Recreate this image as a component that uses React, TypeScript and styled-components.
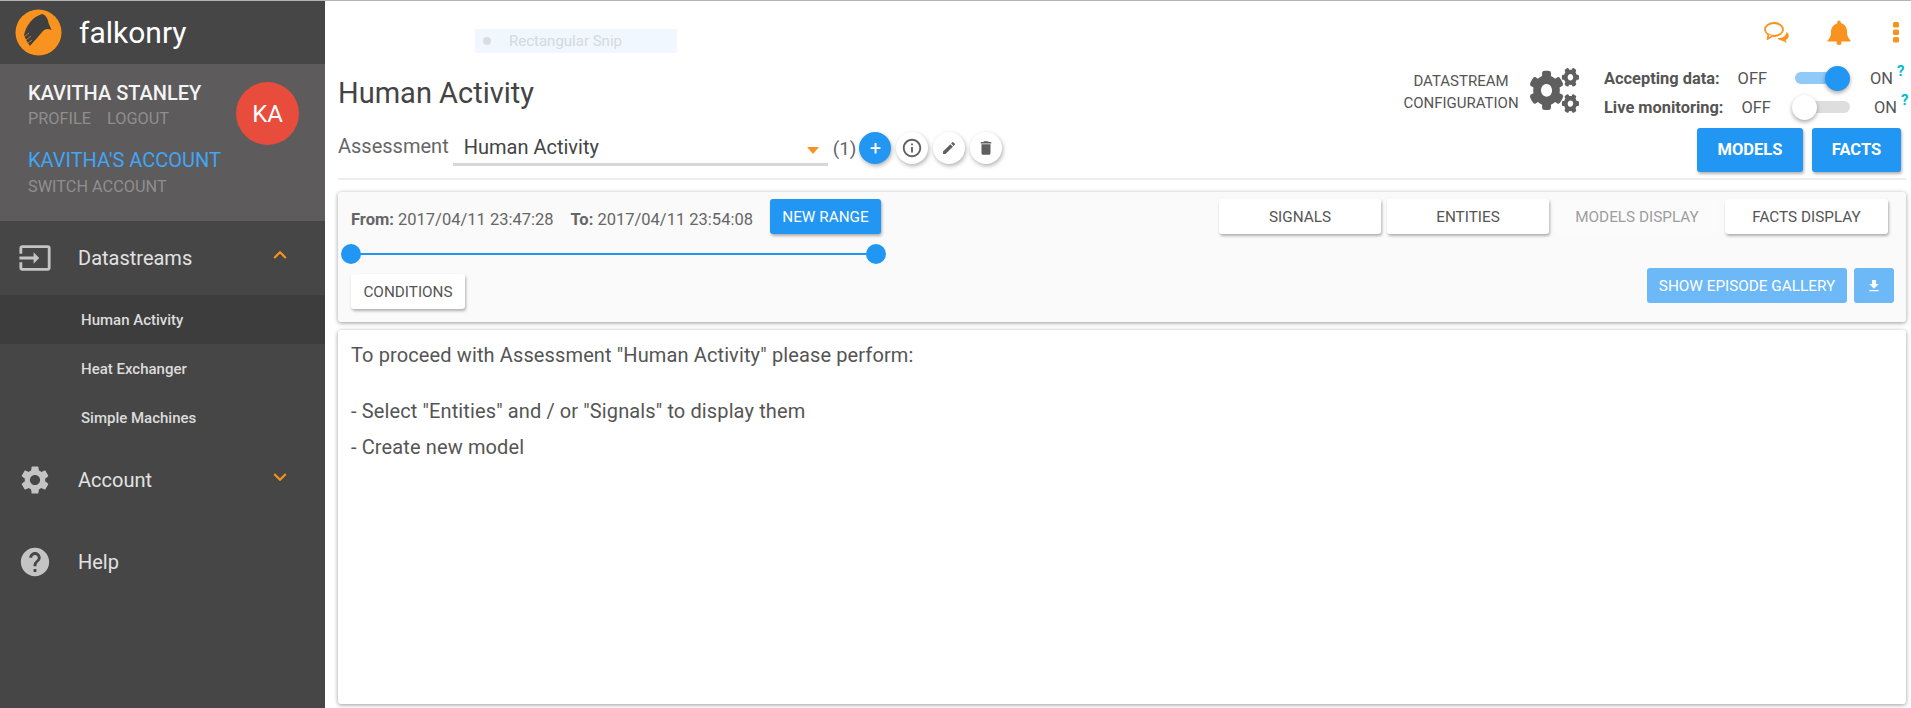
import styled, { createGlobalStyle } from "styled-components";
import {
  MdInput,
  MdSettings,
  MdHelp,
  MdKeyboardArrowUp,
  MdKeyboardArrowDown,
  MdInfoOutline,
  MdEdit,
  MdDelete,
  MdFileDownload,
} from "react-icons/md";
import { FaCogs } from "react-icons/fa";

const GlobalStyle = createGlobalStyle`
  html, body {
    margin: 0;
    padding: 0;
    background: #fff;
    font-family: Roboto, "Liberation Sans", sans-serif;
    color: #555;
  }
  * { box-sizing: border-box; }
`;

const Page = styled.div`
  display: flex;
  width: 1911px;
  height: 708px;
  overflow: hidden;
  border-top: 1px solid #b4b4b4;
`;

const Sidebar = styled.aside`
  width: 325px;
  flex-shrink: 0;
  background: #464646;
  display: flex;
  flex-direction: column;
`;

const Brand = styled.div`
  height: 63px;
  display: flex;
  align-items: center;
  padding-left: 15px;
  gap: 17px;
  color: #fff;
  font-size: 30px;
`;

const UserPanel = styled.div`
  height: 157px;
  background: #5d5b5c;
  padding: 18px 0 0 28px;
  position: relative;
`;

const UserName = styled.div`
  color: #f4f4f4;
  font-size: 20px;
  font-weight: 500;
  line-height: 22px;
`;

const AccountName = styled.div`
  color: #42a5f5;
  font-size: 20px;
  line-height: 22px;
  margin-top: 21px;
`;

const MutedLinks = styled.div`
  display: flex;
  gap: 16px;
  color: #8f8f8f;
  font-size: 16.3px;
  line-height: 18px;
  margin-top: 6px;
`;

const SwitchLink = styled(MutedLinks)`
  margin-top: 7px;
`;

const Avatar = styled.div`
  position: absolute;
  left: 236px;
  top: 18px;
  width: 63px;
  height: 63px;
  border-radius: 50%;
  background: #e74c3c;
  color: #fff;
  font-size: 24px;
  display: flex;
  align-items: center;
  justify-content: center;
`;

const NavItem = styled.div<{ $height: number }>`
  height: ${(p) => p.$height}px;
  display: flex;
  align-items: center;
  padding-left: 18px;
  color: #e2e2e2;
  font-size: 20px;
  svg.nav-icon {
    width: 34px;
    height: 34px;
    color: #c4c4c4;
    margin-right: 26px;
    flex-shrink: 0;
  }
  svg.chevron {
    width: 26px;
    height: 26px;
    color: #f7931e;
    margin-left: auto;
    margin-right: 32px;
    margin-top: -6px;
  }
`;

const SubItem = styled.div<{ $active?: boolean }>`
  height: 49px;
  display: flex;
  align-items: center;
  padding-left: 81px;
  font-size: 15px;
  font-weight: 500;
  color: #dcdcdc;
  background: ${(p) => (p.$active ? "#3d3d3d" : "transparent")};
`;

const Main = styled.main`
  flex: 1;
  min-width: 0;
  padding: 0 5px 0 13px;
  display: flex;
  flex-direction: column;
`;

const TopBar = styled.div`
  height: 60px;
  display: flex;
  align-items: center;
  padding-top: 2px;
`;

const Snip = styled.div`
  margin: 18px 0 0 137px;
  width: 202px;
  height: 24px;
  background: #f0f7fe;
  display: flex;
  align-items: center;
  color: #d5dadd;
  font-size: 15px;
  &::before {
    content: "";
    width: 8px;
    height: 8px;
    border-radius: 50%;
    background: #d9dde0;
    margin: 0 18px 0 8px;
  }
`;

const TopIcons = styled.div`
  margin-left: auto;
  display: flex;
  align-items: center;
  gap: 38px;
  padding-right: 7px;
`;

const BellSvg = styled.svg`
  margin-right: 4px;
`;

const TitleRow = styled.div`
  height: 66px;
  display: flex;
  align-items: flex-start;
  justify-content: space-between;
`;

const Title = styled.h1`
  margin: 12px 0 0;
  font-size: 29px;
  font-weight: 400;
  color: #444;
  line-height: 40px;
`;

const StatusArea = styled.div`
  display: flex;
  align-items: flex-start;
`;

const ConfigLabel = styled.div`
  font-size: 15px;
  line-height: 22px;
  text-align: center;
  color: #555;
  padding-top: 9px;
  width: 122px;
`;

const ConfigIcon = styled(FaCogs)`
  width: 49px;
  height: 45px;
  color: #5f5f5f;
  margin: 7px 25px 0 8px;
`;

const ToggleList = styled.div`
  display: flex;
  flex-direction: column;
  gap: 9px;
  width: 302px;
  padding-top: 7px;
`;

const ToggleRow = styled.div`
  display: flex;
  align-items: center;
  height: 20px;
  font-size: 16.4px;
  color: #555;
`;

const ToggleLabel = styled.span`
  font-weight: 700;
  margin-right: 18px;
`;

const Switch = styled.span<{ $on?: boolean }>`
  position: relative;
  width: 55px;
  height: 12px;
  border-radius: 6px;
  background: ${(p) => (p.$on ? "#90caf9" : "#dedede")};
  margin-left: auto;
  &::after {
    content: "";
    position: absolute;
    top: -6.5px;
    left: ${(p) => (p.$on ? "30px" : "-3px")};
    width: 25px;
    height: 25px;
    border-radius: 50%;
    background: ${(p) => (p.$on ? "#2196f3" : "#fff")};
    box-shadow: 0 2px 4px rgba(0, 0, 0, 0.35);
  }
`;

const OnLabel = styled.span<{ $indent: number }>`
  position: relative;
  width: 56px;
  flex-shrink: 0;
  padding-left: ${(p) => p.$indent}px;
  sup {
    position: absolute;
    left: ${(p) => p.$indent + 27}px;
    top: -7px;
    color: #00bcd4;
    font-size: 15px;
    font-weight: 700;
  }
`;

const AssessmentRow = styled.div`
  height: 53px;
  display: flex;
  align-items: center;
  border-bottom: 2px solid #eee;
  padding-bottom: 9px;
`;

const AssessmentLabel = styled.span`
  font-size: 20px;
  color: #666;
  margin-top: -5px;
`;

const SelectBox = styled.div`
  width: 375px;
  height: 36px;
  margin-left: 4px;
  padding-left: 11px;
  border-bottom: 3px solid #d8d8d8;
  display: flex;
  align-items: center;
  font-size: 20px;
  color: #444;
  &::after {
    content: "";
    margin-left: auto;
    margin-right: 9px;
    margin-top: 8px;
    border-left: 6px solid transparent;
    border-right: 6px solid transparent;
    border-top: 7px solid #f7931e;
  }
`;

const Count = styled.span`
  font-size: 19px;
  color: #666;
  margin: 0 3px 0 5px;
`;

const RoundButton = styled.button<{ $primary?: boolean }>`
  width: 32px;
  height: 32px;
  border-radius: 50%;
  border: 0;
  padding: 0;
  margin-right: 5px;
  background: ${(p) => (p.$primary ? "#2196f3" : "#fff")};
  color: ${(p) => (p.$primary ? "#fff" : "#5f5f5f")};
  font-size: 20px;
  font-family: inherit;
  display: flex;
  align-items: center;
  justify-content: center;
  box-shadow: 1px 2px 4px rgba(0, 0, 0, 0.3);
`;

const HeaderActions = styled.div`
  margin-left: auto;
  display: flex;
  gap: 9px;
  padding-right: 5px;
  margin-top: 3px;
`;

const Button = styled.button<{ $width: number; $variant?: string; $height?: number; $bold?: boolean }>`
  width: ${(p) => p.$width}px;
  height: ${(p) => p.$height ?? 35}px;
  border: 0;
  padding: 0;
  border-radius: 3px;
  font-family: inherit;
  font-size: ${(p) => (p.$bold ? 16.5 : 15.3)}px;
  font-weight: ${(p) => (p.$bold ? 700 : 400)};
  display: flex;
  align-items: center;
  justify-content: center;
  background: ${(p) =>
    p.$variant === "primary"
      ? "#2196f3"
      : p.$variant === "soft"
        ? "#6db8f6"
        : p.$variant === "disabled"
          ? "#fbfbfb"
          : "#fff"};
  color: ${(p) =>
    p.$variant === "primary" || p.$variant === "soft"
      ? "#fff"
      : p.$variant === "disabled"
        ? "#9e9e9e"
        : "#555"};
  box-shadow: ${(p) =>
    p.$variant === "soft" || p.$variant === "disabled"
      ? "none"
      : "1px 2px 3px rgba(0, 0, 0, 0.3)"};
`;

const FilterPanel = styled.section`
  margin-top: 12px;
  height: 130px;
  background: #fafafa;
  border-radius: 3px;
  box-shadow: 0 1px 4px rgba(0, 0, 0, 0.4);
  padding: 7px 13px 0;
  display: flex;
  justify-content: space-between;
`;

const FilterLeft = styled.div`
  width: 530px;
`;

const RangeRow = styled.div`
  display: flex;
  align-items: center;
  font-size: 16.5px;
  color: #666;
  white-space: nowrap;
  b {
    font-weight: 700;
  }
`;

const RangeText = styled.span`
  margin-right: 17px;
  padding-top: 5px;
`;

const Slider = styled.div`
  position: relative;
  width: 525px;
  height: 2px;
  background: #2196f3;
  margin: 19px 0 19px;
`;

const Thumb = styled.span<{ $end?: boolean }>`
  position: absolute;
  top: -9px;
  ${(p) => (p.$end ? "right: -10px;" : "left: -10px;")}
  width: 20px;
  height: 20px;
  border-radius: 50%;
  background: #2196f3;
`;

const FilterRight = styled.div`
  display: flex;
  flex-direction: column;
  align-items: flex-end;
`;

const DisplayButtons = styled.div`
  display: flex;
  gap: 6px;
  margin-right: 5px;
`;

const GalleryButtons = styled.div`
  display: flex;
  gap: 7px;
  margin: 34px -1px 0 0;
`;

const ContentPanel = styled.section`
  margin-top: 8px;
  height: 374px;
  background: #fff;
  border-radius: 3px;
  box-shadow: 0 1px 4px rgba(0, 0, 0, 0.4);
  padding: 12px 13px;
  font-size: 20px;
  letter-spacing: 0.12px;
  color: #555;
`;

const Para = styled.p<{ $top: number }>`
  margin: ${(p) => p.$top}px 0 0;
  line-height: 26px;
`;

function Logo() {
  return (
    <svg width="47" height="47" viewBox="0 0 47 47">
      <circle cx="23.5" cy="23.5" r="23" fill="#f7931e" />
      <path
        d="M27 5C31 6 33 10 33.500 14L36.500 21C33 19 30 20 28 22C24 27 20 31 15 37C12 33 10 29 9 26C11 17 17 8 27 5z"
        fill="#3f3f3f"
      />
      <path d="M9 28l5-4M11 31l5-4M13 34l4-3" stroke="#f7931e" strokeWidth="0.7" fill="none" />
    </svg>
  );
}

function ChatIcon() {
  return (
    <svg width="25" height="21" viewBox="0 0 25 21">
      <path d="M14 16c5 0 8-2 8.500-6 2 1 2.500 3 2 5-.5 1.500-1.500 2.500-3 3l1.500 3-5-2.500c-2 0-3.500-1-4.500-2.500z" fill="#f7931e" />
      <ellipse cx="10" cy="7.500" rx="9" ry="6.500" fill="#fff" stroke="#f7931e" strokeWidth="1.800" />
      <path d="M4.500 12.500L3.500 17l5-3" fill="#fff" stroke="#f7931e" strokeWidth="1.800" strokeLinejoin="round" />
    </svg>
  );
}

function BellIcon() {
  return (
    <BellSvg width="24" height="25" viewBox="0 0 24 25" fill="#f7931e">
      <path d="M12 .5c1 0 1.800.8 1.800 1.800v.7c4 1 6.200 4.500 6.200 8.500 0 4 1 6.500 3.500 9v1H.5v-1C3 18 4 16 4 12c0-4 2.200-7.500 6.200-8.500v-.7C10.200 1.300 11 .5 12 .5z" />
      <circle cx="12" cy="22.500" r="2.500" />
    </BellSvg>
  );
}

function DotsIcon() {
  return (
    <svg width="6" height="21" viewBox="0 0 6 21" fill="#f7931e">
      <rect width="6" height="5.500" rx="1.500" />
      <rect y="7.500" width="6" height="5.500" rx="1.500" />
      <rect y="15" width="6" height="5.500" rx="1.500" />
    </svg>
  );
}

export default function App() {
  return (
    <Page>
      <GlobalStyle />
      <Sidebar>
        <Brand>
          <Logo />
          falkonry
        </Brand>
        <UserPanel>
          <UserName>KAVITHA STANLEY</UserName>
          <MutedLinks>
            <span>PROFILE</span>
            <span>LOGOUT</span>
          </MutedLinks>
          <AccountName>KAVITHA'S ACCOUNT</AccountName>
          <SwitchLink>SWITCH ACCOUNT</SwitchLink>
          <Avatar>KA</Avatar>
        </UserPanel>
        <NavItem $height={74}>
          <MdInput className="nav-icon" />
          Datastreams
          <MdKeyboardArrowUp className="chevron" />
        </NavItem>
        <SubItem $active>Human Activity</SubItem>
        <SubItem>Heat Exchanger</SubItem>
        <SubItem>Simple Machines</SubItem>
        <NavItem $height={75}>
          <MdSettings className="nav-icon" />
          Account
          <MdKeyboardArrowDown className="chevron" />
        </NavItem>
        <NavItem $height={90}>
          <MdHelp className="nav-icon" />
          Help
        </NavItem>
      </Sidebar>
      <Main>
        <TopBar>
          <Snip>Rectangular Snip</Snip>
          <TopIcons>
            <ChatIcon />
            <BellIcon />
            <DotsIcon />
          </TopIcons>
        </TopBar>
        <TitleRow>
          <Title>Human Activity</Title>
          <StatusArea>
            <ConfigLabel>
              DATASTREAM
              <br />
              CONFIGURATION
            </ConfigLabel>
            <ConfigIcon preserveAspectRatio="none" />
            <ToggleList>
              <ToggleRow>
                <ToggleLabel>Accepting data:</ToggleLabel>
                OFF
                <Switch $on />
                <OnLabel $indent={20}>
                  ON<sup>?</sup>
                </OnLabel>
              </ToggleRow>
              <ToggleRow>
                <ToggleLabel>Live monitoring:</ToggleLabel>
                OFF
                <Switch />
                <OnLabel $indent={24}>
                  ON<sup>?</sup>
                </OnLabel>
              </ToggleRow>
            </ToggleList>
          </StatusArea>
        </TitleRow>
        <AssessmentRow>
          <AssessmentLabel>Assessment</AssessmentLabel>
          <SelectBox>Human Activity</SelectBox>
          <Count>(1)</Count>
          <RoundButton $primary>+</RoundButton>
          <RoundButton>
            <MdInfoOutline size={22} />
          </RoundButton>
          <RoundButton>
            <MdEdit size={16} />
          </RoundButton>
          <RoundButton>
            <MdDelete size={18} />
          </RoundButton>
          <HeaderActions>
            <Button $width={106} $height={44} $variant="primary" $bold>
              MODELS
            </Button>
            <Button $width={89} $height={44} $variant="primary" $bold>
              FACTS
            </Button>
          </HeaderActions>
        </AssessmentRow>
        <FilterPanel>
          <FilterLeft>
            <RangeRow>
              <RangeText>
                <b>From:</b> 2017/04/11 23:47:28
              </RangeText>
              <RangeText>
                <b>To:</b> 2017/04/11 23:54:08
              </RangeText>
              <Button $width={111} $variant="primary">
                NEW RANGE
              </Button>
            </RangeRow>
            <Slider>
              <Thumb />
              <Thumb $end />
            </Slider>
            <Button $width={114}>CONDITIONS</Button>
          </FilterLeft>
          <FilterRight>
            <DisplayButtons>
              <Button $width={162}>SIGNALS</Button>
              <Button $width={162}>ENTITIES</Button>
              <Button $width={164} $variant="disabled">
                MODELS DISPLAY
              </Button>
              <Button $width={163}>FACTS DISPLAY</Button>
            </DisplayButtons>
            <GalleryButtons>
              <Button $width={200} $variant="soft">
                SHOW EPISODE GALLERY
              </Button>
              <Button $width={40} $variant="soft">
                <MdFileDownload size={16} />
              </Button>
            </GalleryButtons>
          </FilterRight>
        </FilterPanel>
        <ContentPanel>
          <Para $top={0}>To proceed with Assessment "Human Activity" please perform:</Para>
          <Para $top={30}>- Select "Entities" and / or "Signals" to display them</Para>
          <Para $top={10}>- Create new model</Para>
        </ContentPanel>
      </Main>
    </Page>
  );
}
